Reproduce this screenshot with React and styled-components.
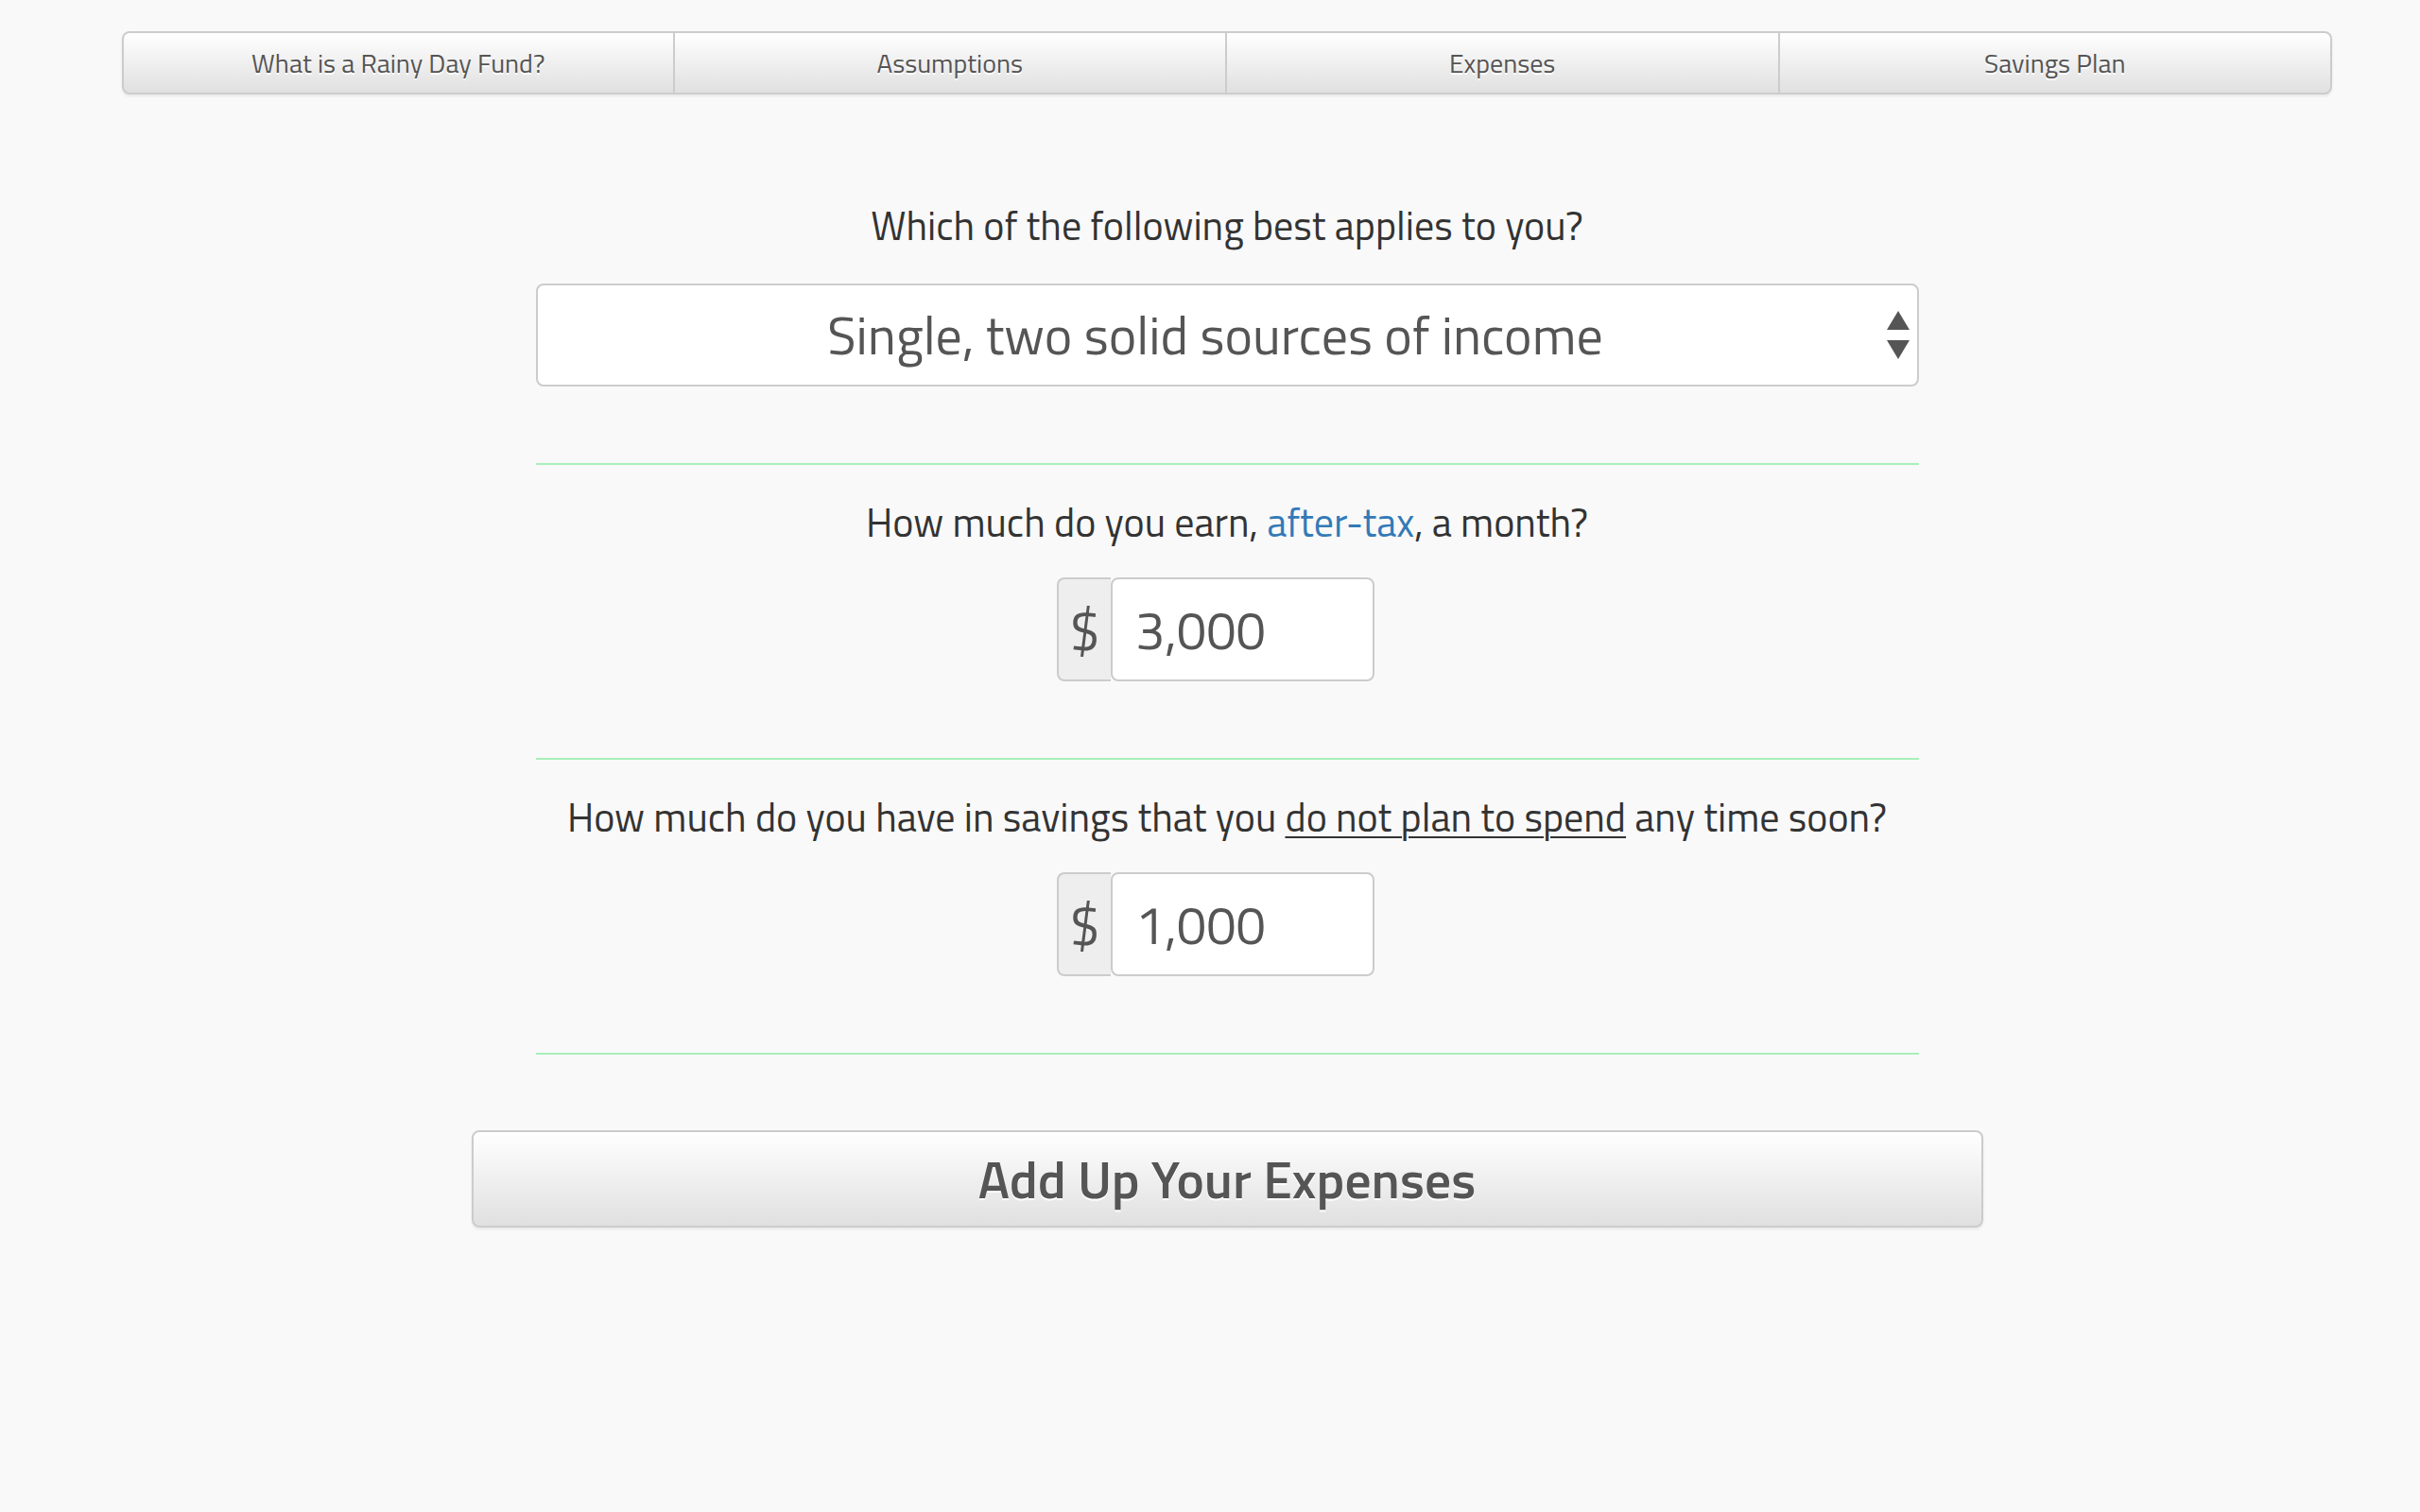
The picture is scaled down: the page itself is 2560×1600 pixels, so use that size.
import React from "react";
import styled, { createGlobalStyle } from "styled-components";

const GlobalStyle = createGlobalStyle`
  html, body { margin: 0; padding: 0; background: #f9f9f9; }
  body {
    font-family: "Titillium Web", "Liberation Sans", sans-serif;
    color: #333;
  }
  *, *::before, *::after { box-sizing: border-box; }
`;

const Page = styled.div`
  width: 2338px;
  margin-left: 129px;
  padding-top: 33px;
  padding-bottom: 120px;
  display: flex;
  flex-direction: column;
  align-items: center;
`;

const TabBar = styled.nav`
  width: 100%;
  height: 67px;
  display: grid;
  grid-template-columns: repeat(4, 1fr);
  border-radius: 8px;
  box-shadow: 0 2px 3px rgba(0, 0, 0, 0.07);
`;

const Tab = styled.button`
  font-family: inherit;
  font-size: 28px;
  color: #555;
  text-shadow: 0 2px 0 #fff;
  background: linear-gradient(to bottom, #ffffff 0%, #e0e0e0 100%);
  border: 2px solid #ccc;
  border-left-width: ${(p) => (p.$first ? "2px" : "0")};
  border-radius: ${(p) => (p.$first ? "8px 0 0 8px" : p.$last ? "0 8px 8px 0" : "0")};
  padding: 0;
  cursor: pointer;
`;

const Form = styled.div`
  width: 1463px;
  margin-top: 108px;
  display: flex;
  flex-direction: column;
`;

const Question = styled.p`
  margin: ${(p) => (p.$first ? "0" : "30px")} 0 0;
  font-size: 42px;
  line-height: 60px;
  text-align: center;
  color: #333;
`;

const Link = styled.a`
  color: #337ab7;
  text-decoration: none;
`;

const Emph = styled.span`
  text-decoration: underline;
  text-decoration-thickness: 2px;
  text-underline-offset: 5px;
`;

const SelectWrap = styled.div`
  position: relative;
  margin-top: 32px;
  height: 109px;
`;

const Select = styled.select`
  appearance: none;
  -webkit-appearance: none;
  width: 100%;
  height: 100%;
  background: #fff;
  border: 2px solid #ccc;
  border-radius: 8px;
  font-family: inherit;
  font-size: 56px;
  color: #555;
  text-align: center;
  text-align-last: center;
  padding: 0 37px 0 12px;
  outline: none;
`;

const Arrows = styled.svg`
  position: absolute;
  right: 10px;
  top: 29px;
  pointer-events: none;
`;

const InputRow = styled.div`
  margin-top: 29px;
  display: flex;
  justify-content: center;
  padding-right: 24px;
`;

const Addon = styled.span`
  width: 57px;
  height: 110px;
  display: flex;
  align-items: center;
  justify-content: center;
  background: #eee;
  border: 2px solid #ccc;
  border-right: 0;
  border-radius: 8px 0 0 8px;
  font-size: 58px;
  color: #555;
`;

const Input = styled.input`
  width: 279px;
  height: 110px;
  background: #fff;
  border: 2px solid #ccc;
  border-radius: 8px;
  padding: 0 24px;
  font-family: inherit;
  font-size: 56px;
  color: #555;
  outline: none;
`;

const Rule = styled.hr`
  margin: 81px 0 0;
  border: 0;
  height: 2px;
  background: #a9efbb;
`;

const BigButton = styled.button`
  width: 1599px;
  height: 103px;
  margin-top: 80px;
  background: linear-gradient(to bottom, #ffffff 0%, #e0e0e0 100%);
  border: 2px solid #ccc;
  border-radius: 8px;
  box-shadow: 0 2px 3px rgba(0, 0, 0, 0.07);
  font-family: inherit;
  font-size: 55.5px;
  font-weight: 600;
  color: #555;
  text-shadow: 0 2px 0 #fff;
  cursor: pointer;
`;

const tabs = ["What is a Rainy Day Fund?", "Assumptions", "Expenses", "Savings Plan"];

function MoneyInput({ value }) {
  return (
    <InputRow>
      <Addon>$</Addon>
      <Input type="text" defaultValue={value} />
    </InputRow>
  );
}

export default function App() {
  return (
    <>
      <GlobalStyle />
      <Page>
        <TabBar>
          {tabs.map((t, i) => (
            <Tab key={t} $first={i === 0} $last={i === tabs.length - 1}>
              {t}
            </Tab>
          ))}
        </TabBar>

        <Form>
          <Question $first>Which of the following best applies to you?</Question>
          <SelectWrap>
            <Select defaultValue="single2">
              <option value="single1">Single, one solid source of income</option>
              <option value="single2">Single, two solid sources of income</option>
              <option value="couple">Couple, two solid sources of income</option>
            </Select>
            <Arrows width="24" height="51" viewBox="0 0 24 51">
              <polygon points="12,0 24,20 0,20" fill="#555" />
              <polygon points="0,31 24,31 12,51" fill="#555" />
            </Arrows>
          </SelectWrap>
          <Rule />

          <Question>
            How much do you earn, <Link href="#">after-tax</Link>, a month?
          </Question>
          <MoneyInput value="3,000" />
          <Rule />

          <Question>
            How much do you have in savings that you <Emph>do not plan to spend</Emph> any time soon?
          </Question>
          <MoneyInput value="1,000" />
          <Rule />
        </Form>

        <BigButton>Add Up Your Expenses</BigButton>
      </Page>
    </>
  );
}
